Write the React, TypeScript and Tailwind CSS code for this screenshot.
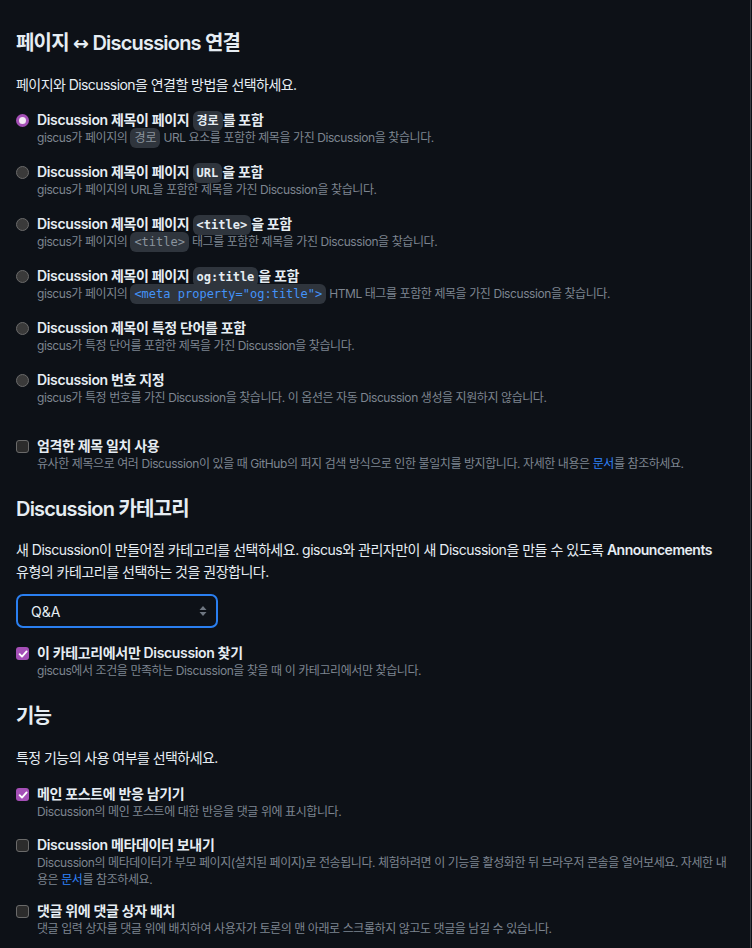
import React from "react";

const SANS = "font-['Inter','Noto_Sans_CJK_KR',sans-serif]";
const MONO = "font-['DejaVu_Sans_Mono','Noto_Sans_CJK_KR',monospace]";

function Code({ children, bold, blue }: { children: React.ReactNode; bold?: boolean; blue?: boolean }) {
  return (
    <code
      className={`${MONO} text-[12px] leading-none tracking-normal px-[4px] py-[3px] rounded-[6px] bg-[#2f353d] ${bold ? "font-bold text-[#e6edf3]" : ""} ${blue ? "text-[#4493f8]" : bold ? "" : "text-[#8b949e]"}`}
    >
      {children}
    </code>
  );
}

function Radio({ checked }: { checked?: boolean }) {
  return checked ? (
    <span className="mt-[3px] w-[13px] h-[13px] rounded-full shrink-0 border-[3.5px] border-[#a44fb6] bg-[#f3e9f5]" />
  ) : (
    <span className="mt-[3px] w-[13px] h-[13px] rounded-full shrink-0 border border-[#6a6a6a] bg-[#3a3a3a]" />
  );
}

function Check({ checked }: { checked?: boolean }) {
  return checked ? (
    <span className="mt-[3px] w-[13px] h-[13px] rounded-[3px] shrink-0 bg-[#a44fb6] flex items-center justify-center">
      <svg width="10" height="10" viewBox="0 0 10 10">
        <path d="M1.6 5.2 L4 7.6 L8.6 2.4" stroke="white" strokeWidth="1.9" fill="none" strokeLinecap="round" strokeLinejoin="round" />
      </svg>
    </span>
  ) : (
    <span className="mt-[3px] w-[13px] h-[13px] rounded-[3px] shrink-0 border border-[#6a6a6a] bg-[#2c2c2c]" />
  );
}

function Item({
  control,
  title,
  desc,
  className = "",
}: {
  control: React.ReactNode;
  title: React.ReactNode;
  desc: React.ReactNode;
  className?: string;
}) {
  return (
    <div className={`flex items-start gap-2 ${className}`}>
      {control}
      <div className="min-w-0">
        <div className="h-[18px] text-[14px] leading-[18px] font-semibold tracking-[-0.025em] text-[#e6edf3] whitespace-nowrap">{title}</div>
        <div className="text-[12px] leading-[17px] tracking-[-0.035em] text-[#7d8590]">{desc}</div>
      </div>
    </div>
  );
}

function Link({ children }: { children: React.ReactNode }) {
  return <span className="text-[#2f81f7]">{children}</span>;
}

export default function App() {
  return (
    <div className={`min-h-screen w-full bg-[#0d1117] ${SANS}`}>
      <div className="w-[751px] min-h-screen border-r border-[#3a3d42] px-4 pt-[31px] pb-6">
        <h3 className="text-[20px] leading-[25px] font-semibold tracking-[-0.04em] text-[#e6edf3]">
          페이지 <span className="font-['DejaVu_Sans',sans-serif] text-[19px] font-bold">↔</span> Discussions 연결
        </h3>
        <p className="mt-[18px] text-[14px] leading-[21px] tracking-[-0.04em] text-[#e6edf3]">페이지와 Discussion을 연결할 방법을 선택하세요.</p>

        <div className="mt-[16px] flex flex-col gap-[17px]">
          <Item
            control={<Radio checked />}
            title={
              <>
                Discussion 제목이 페이지 <Code bold>경로</Code>를 포함
              </>
            }
            desc={
              <>
                giscus가 페이지의 <Code>경로</Code> URL 요소를 포함한 제목을 가진 Discussion을 찾습니다.
              </>
            }
          />
          <Item
            control={<Radio />}
            title={
              <>
                Discussion 제목이 페이지 <Code bold>URL</Code>을 포함
              </>
            }
            desc="giscus가 페이지의 URL을 포함한 제목을 가진 Discussion을 찾습니다."
          />
          <Item
            control={<Radio />}
            title={
              <>
                Discussion 제목이 페이지 <Code bold>{"<title>"}</Code>을 포함
              </>
            }
            desc={
              <>
                giscus가 페이지의 <Code>{"<title>"}</Code> 태그를 포함한 제목을 가진 Discussion을 찾습니다.
              </>
            }
          />
          <Item
            control={<Radio />}
            title={
              <>
                Discussion 제목이 페이지 <Code bold>og:title</Code>을 포함
              </>
            }
            desc={
              <>
                giscus가 페이지의 <Code blue>{'<meta property="og:title">'}</Code> HTML 태그를 포함한 제목을 가진 Discussion을 찾습니다.
              </>
            }
          />
          <Item
            control={<Radio />}
            title="Discussion 제목이 특정 단어를 포함"
            desc="giscus가 특정 단어를 포함한 제목을 가진 Discussion을 찾습니다."
          />
          <Item
            control={<Radio />}
            title="Discussion 번호 지정"
            desc="giscus가 특정 번호를 가진 Discussion을 찾습니다. 이 옵션은 자동 Discussion 생성을 지원하지 않습니다."
          />
        </div>

        <Item
          className="mt-[31px]"
          control={<Check />}
          title="엄격한 제목 일치 사용"
          desc={
            <>
              유사한 제목으로 여러 Discussion이 있을 때 GitHub의 퍼지 검색 방식으로 인한 불일치를 방지합니다. 자세한 내용은 <Link>문서</Link>를 참조하세요.
            </>
          }
        />

        <h3 className="mt-[25px] text-[20px] leading-[25px] font-semibold tracking-[-0.04em] text-[#e6edf3]">Discussion 카테고리</h3>
        <p className="mt-[17px] text-[14px] leading-[22px] tracking-[-0.035em] text-[#e6edf3]">
          새 Discussion이 만들어질 카테고리를 선택하세요. giscus와 관리자만이 새 Discussion을 만들 수 있도록 <strong className="font-semibold">Announcements</strong> <span className="whitespace-nowrap">유형의</span> 카테고리를 선택하는 것을 권장합니다.
        </p>

        <div className="mt-[11px] w-[202px] h-[34px] rounded-[7px] border-2 border-[#2a7ff0] bg-[#0d1117] flex items-center justify-between pl-[13px] pr-[9px]">
          <span className="text-[14px] text-[#e6edf3]">Q&amp;A</span>
          <svg width="8" height="12" viewBox="0 0 8 12">
            <path d="M4 1 L7.5 5 L0.5 5 Z" fill="#6e7681" />
            <path d="M4 11 L7.5 7 L0.5 7 Z" fill="#6e7681" />
          </svg>
        </div>

        <Item
          className="mt-[16px]"
          control={<Check checked />}
          title="이 카테고리에서만 Discussion 찾기"
          desc="giscus에서 조건을 만족하는 Discussion을 찾을 때 이 카테고리에서만 찾습니다."
        />

        <h3 className="mt-[25px] text-[20px] leading-[25px] font-semibold tracking-[-0.04em] text-[#e6edf3]">기능</h3>
        <p className="mt-[18px] text-[14px] leading-[21px] tracking-[-0.04em] text-[#e6edf3]">특정 기능의 사용 여부를 선택하세요.</p>

        <div className="mt-[17px] flex flex-col">
          <Item
            control={<Check checked />}
            title="메인 포스트에 반응 남기기"
            desc="Discussion의 메인 포스트에 대한 반응을 댓글 위에 표시합니다."
          />
          <Item
            className="mt-[16px]"
            control={<Check />}
            title="Discussion 메타데이터 보내기"
            desc={
              <>
                Discussion의 메타데이터가 부모 페이지(설치된 페이지)로 전송됩니다. 체험하려면 이 기능을 활성화한 뒤 브라우저 콘솔을 열어보세요. 자세한 내용은 <Link>문서</Link>를 참조하세요.
              </>
            }
          />
          <Item
            className="mt-[14px]"
            control={<Check />}
            title="댓글 위에 댓글 상자 배치"
            desc="댓글 입력 상자를 댓글 위에 배치하여 사용자가 토론의 맨 아래로 스크롤하지 않고도 댓글을 남길 수 있습니다."
          />
        </div>
      </div>
    </div>
  );
}
